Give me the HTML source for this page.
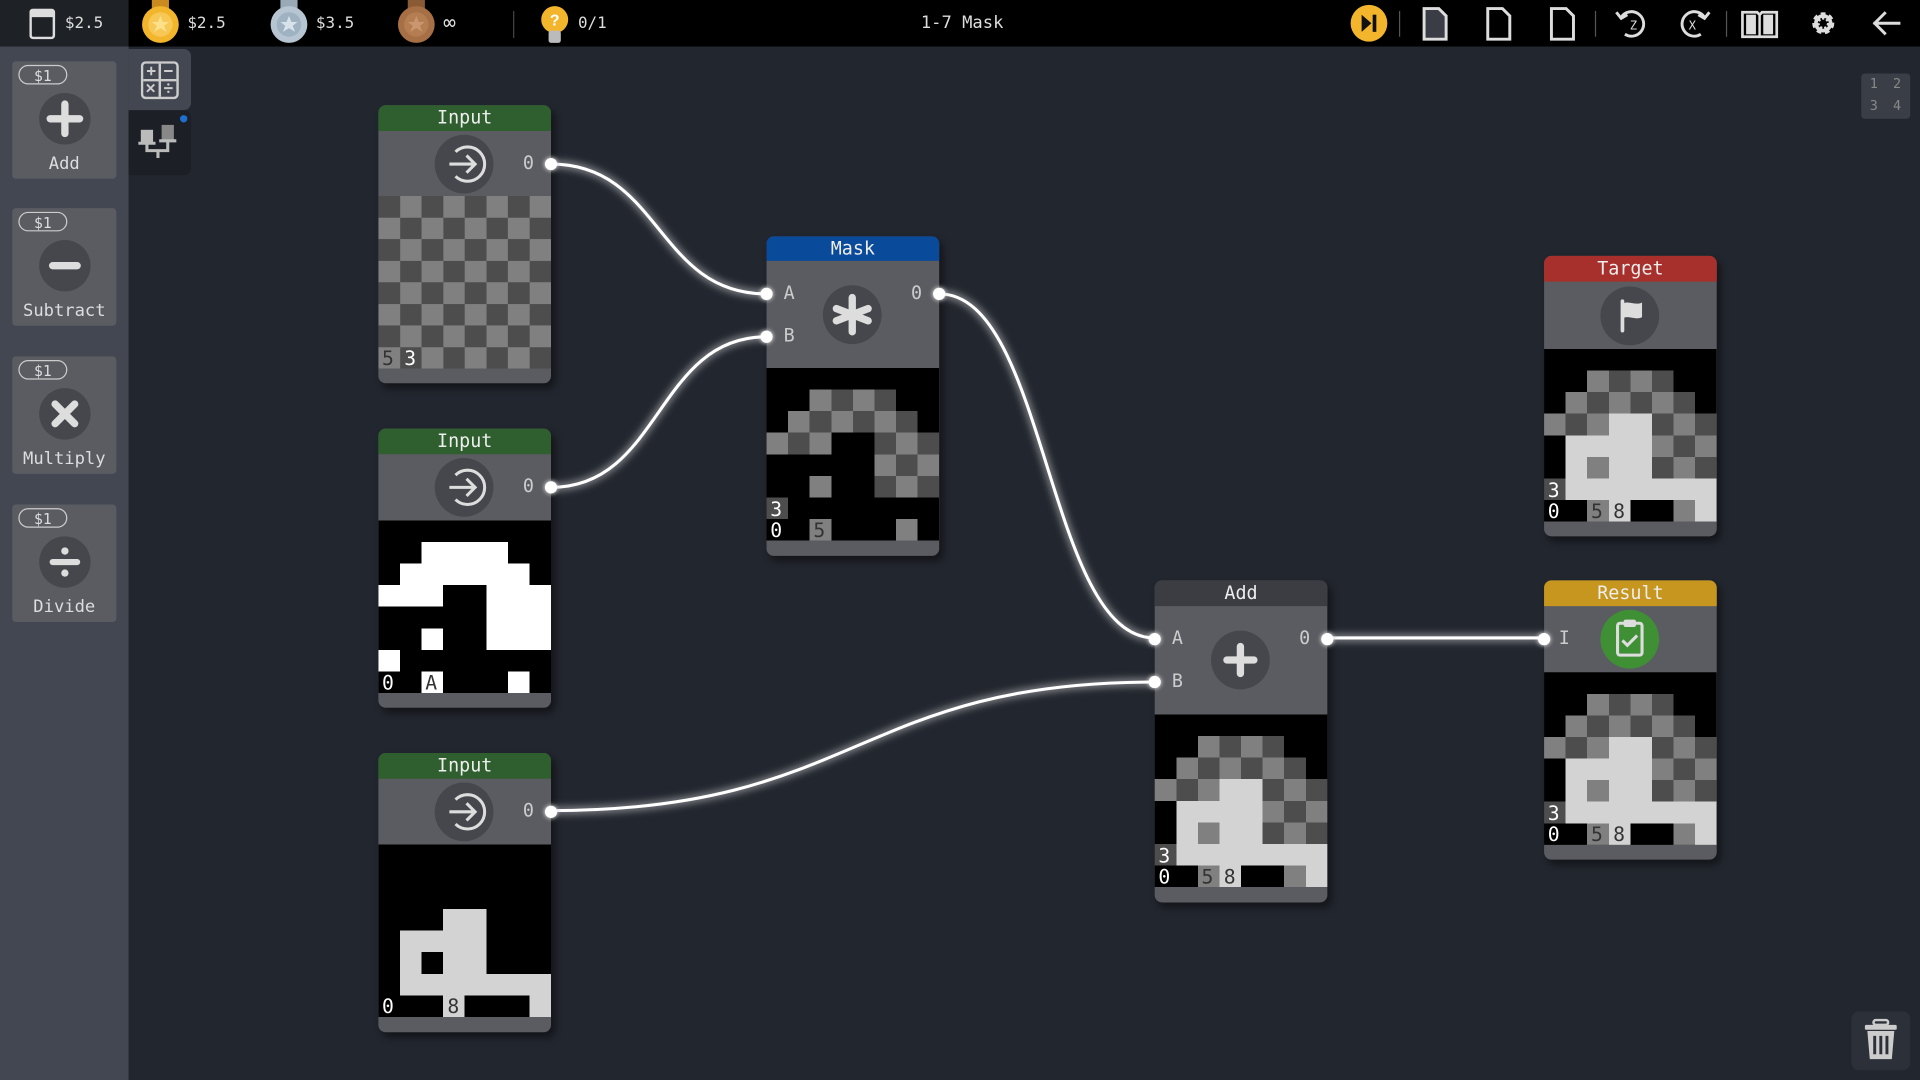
<!DOCTYPE html>
<html><head><meta charset="utf-8"><style>
html,body{margin:0;padding:0;width:1920px;height:1080px;overflow:hidden;background:#22262e}
#s{position:absolute;left:0;top:0;width:1568px;height:882px;transform:scale(1.22449);transform-origin:0 0;font-family:"DejaVu Sans Mono","Liberation Mono",monospace;color:#ddd;background:#22262e}
.top{position:absolute;left:0;top:0;width:1568px;height:38px;background:#000}
.tl{position:absolute;left:0;top:0;width:105px;height:38px;background:#1e2126}
.side{position:absolute;left:0;top:38px;width:105px;height:844px;background:#434751}
.card{position:absolute;left:10px;width:85px;height:96px;background:#5a5c62;border-radius:3px}
.price{position:absolute;left:5px;top:3px;width:40px;height:16px;border:1.5px solid #ccc;border-radius:9px;font-size:12px;text-align:center;line-height:16px;color:#ddd;box-sizing:border-box}
.card .ic{position:absolute;left:22px;top:26px;width:42px;height:42px;border-radius:50%;background:#46474c}
.card .lb{position:absolute;left:0;width:85px;top:76px;text-align:center;font-size:14px;color:#ddd}
.node{position:absolute;width:141px;border-radius:6px;background:#5b5c61;box-shadow:3px 4px 6px rgba(0,0,0,.45);overflow:visible}
.hd{height:21px;border-radius:6px 6px 0 0;text-align:center;font-size:15px;line-height:21px;color:#eee}
.bd{position:relative}
.circ{position:absolute;width:48px;height:48px;border-radius:50%;background:#46474c;left:46px}
.pl{position:absolute;font-size:15px;color:#ccc}
.port{position:absolute;width:10px;height:10px;border-radius:50%;background:#fff;box-shadow:0 0 4px #fff}
svg.g{display:block}
.ft{height:12px;border-radius:0 0 6px 6px}
.tt{position:absolute;top:12px;font-size:13px;color:#ddd}
</style></head><body><div id="s">
<div class="top"></div><div class="tl"></div>
<svg style="position:absolute;left:24px;top:7px" width="22" height="26"><rect x="1" y="1" width="19" height="23" rx="2" fill="none" stroke="#ddd" stroke-width="2"/><rect x="1" y="1" width="19" height="6" fill="#ddd"/></svg>
<div class="tt" style="left:53px">$2.5</div>
<svg style="position:absolute;left:114px;top:-2px" width="34" height="42"><rect x="10" y="0" width="14" height="14" fill="#c98a20"/><circle cx="17" cy="22" r="15" fill="#f2b52c"/><circle cx="17" cy="22" r="10" fill="#f7c855"/><path d="M17 15l2 5h5l-4 3 2 5-5-3-5 3 2-5-4-3h5z" fill="#fde08a"/></svg>
<div class="tt" style="left:153px">$2.5</div>
<svg style="position:absolute;left:219px;top:-2px" width="34" height="42"><rect x="10" y="0" width="14" height="14" fill="#9aa9b6"/><circle cx="17" cy="22" r="15" fill="#b7c5d2"/><circle cx="17" cy="22" r="10" fill="#9fb2c2"/><path d="M17 15l2 5h5l-4 3 2 5-5-3-5 3 2-5-4-3h5z" fill="#d8e2ea"/></svg>
<div class="tt" style="left:258px">$3.5</div>
<svg style="position:absolute;left:323px;top:-2px" width="34" height="42"><rect x="10" y="0" width="14" height="14" fill="#8a5a35"/><circle cx="17" cy="22" r="15" fill="#a66f45"/><circle cx="17" cy="22" r="10" fill="#b47d52"/><path d="M17 15l2 5h5l-4 3 2 5-5-3-5 3 2-5-4-3h5z" fill="#c99670"/></svg>
<div class="tt" style="left:362px;font-size:17px;top:9px">∞</div>
<div style="position:absolute;left:419px;top:9px;width:1px;height:22px;background:#444"></div>
<svg style="position:absolute;left:441px;top:4px" width="24" height="34"><circle cx="12" cy="12" r="11" fill="#f2b52c"/><rect x="7" y="21" width="10" height="10" rx="2" fill="#bbb"/><text x="12" y="17" font-size="13" font-weight="bold" text-anchor="middle" fill="#fff" font-family="Liberation Sans">?</text></svg>
<div class="tt" style="left:472px">0/1</div>
<div class="tt" style="left:752px;font-size:14px;top:11px">1-7 Mask</div>
<svg style="position:absolute;left:1100px;top:2px" width="468" height="36" fill="none" stroke="#ddd" stroke-width="2.4">
<circle cx="18" cy="17" r="15" fill="#f2b52c" stroke="none"/><path d="M12 10l8 7-8 7z" fill="#111" stroke="none"/><rect x="21" y="10" width="3" height="14" fill="#111" stroke="none"/>
<line x1="43" y1="7" x2="43" y2="28" stroke="#555" stroke-width="1"/>
<path d="M63 5h12l6 6v19h-18z" fill="#3a3d45"/>
<path d="M115 5h12l6 6v19h-18z"/>
<path d="M167 5h12l6 6v19h-18z"/>
<line x1="203" y1="7" x2="203" y2="28" stroke="#555" stroke-width="1"/>
<path d="M224 12a10 10 0 1 1 3 14"/><path d="M220 8l4 5 5-3" /><text x="231" y="22" font-size="10" fill="#ddd" stroke="none">Z</text>
<path d="M292 12a10 10 0 1 0 -3 14"/><path d="M296 8l-4 5-5-3"/><text x="279" y="22" font-size="10" fill="#ddd" stroke="none">X</text>
<line x1="310" y1="7" x2="310" y2="28" stroke="#555" stroke-width="1"/>
<path d="M323 8h12l2 2 2-2h12v20h-28z" stroke-width="2.2"/><path d="M337 10v18" stroke-width="2"/><rect x="326" y="10" width="8" height="16" fill="#ddd" stroke="none"/><rect x="340" y="10" width="8" height="16" fill="#ddd" stroke="none"/>
<circle cx="389" cy="17" r="6" stroke-width="6" stroke-dasharray="3 2.3"/><circle cx="389" cy="17" r="6" stroke-width="3"/>
<path d="M430 17h22M440 8l-9 9 9 9"/>
</svg>
<div class="side"></div>
<div style="position:absolute;left:105px;top:40px;width:51px;height:50px;background:#434751;border-radius:0 6px 6px 0"></div>
<div style="position:absolute;left:105px;top:90px;width:51px;height:53px;background:#1c1f25;border-radius:0 6px 6px 0"></div>
<svg style="position:absolute;left:115px;top:50px" width="32" height="32"><rect x="1" y="1" width="29" height="29" rx="3" fill="none" stroke="#ccc" stroke-width="2"/><path d="M15.5 2v27M2 15.5h27" stroke="#ccc" stroke-width="2"/><path d="M5 8h7M8.5 4.5v7M19 8h7M5 19l6 6M11 19l-6 6M19 22h7" stroke="#ccc" stroke-width="1.6"/><circle cx="22.5" cy="19" r="1" fill="#ccc"/><circle cx="22.5" cy="25" r="1" fill="#ccc"/></svg>
<svg style="position:absolute;left:110px;top:92px" width="45" height="40"><circle cx="40" cy="5" r="3" fill="#1e6fd0"/><rect x="5" y="14" width="10" height="10" fill="#bbb"/><rect x="22" y="10" width="10" height="12" fill="#888"/><path d="M3 25h14M20 23h14M10 25v6h17v-8M19 31v6" stroke="#bbb" stroke-width="2.5" fill="none"/></svg>
<div class="card" style="top:50px"><div class="price">$1</div><div class="ic"><svg width="42" height="42"><path d="M21 9v24M9 21h24" stroke="#ddd" stroke-width="6" stroke-linecap="round"/></svg></div><div class="lb">Add</div></div>
<div class="card" style="top:170px"><div class="price">$1</div><div class="ic"><svg width="42" height="42"><path d="M11 21h20" stroke="#ddd" stroke-width="6" stroke-linecap="round"/></svg></div><div class="lb">Subtract</div></div>
<div class="card" style="top:291px"><div class="price">$1</div><div class="ic"><svg width="42" height="42"><path d="M13 13l16 16M29 13l-16 16" stroke="#ddd" stroke-width="6" stroke-linecap="round"/></svg></div><div class="lb">Multiply</div></div>
<div class="card" style="top:412px"><div class="price">$1</div><div class="ic"><svg width="42" height="42"><path d="M11 21h20" stroke="#ddd" stroke-width="5" stroke-linecap="round"/><circle cx="21" cy="12" r="3" fill="#ddd"/><circle cx="21" cy="30" r="3" fill="#ddd"/></svg></div><div class="lb">Divide</div></div>
<svg style="position:absolute;left:0;top:0" width="1568" height="882"><defs><filter id="gl" x="-20%" y="-20%" width="140%" height="140%"><feGaussianBlur stdDeviation="3"/></filter></defs>
<g fill="none" stroke="#fff" stroke-opacity=".45" stroke-width="6" filter="url(#gl)">
<path d="M450 134C540 134 536 240 626 240"/><path d="M450 398C540 398 536 275 626 275"/><path d="M767 240C855 240 855 521 943 521"/><path d="M450 662C700 662 700 557 943 557"/><path d="M1084 521H1261"/></g>
<g fill="none" stroke="#fff" stroke-width="2.5">
<path d="M450 134C540 134 536 240 626 240"/><path d="M450 398C540 398 536 275 626 275"/><path d="M767 240C855 240 855 521 943 521"/><path d="M450 662C700 662 700 557 943 557"/><path d="M1084 521H1261"/></g></svg>

<div class="node" style="left:309px;top:86px"><div class="hd" style="background:#2f5f2e">Input</div>
<div class="bd" style="height:53px"><div class="circ" style="top:3px"><svg width="48" height="48"><path d="M17 14a14 14 0 1 1 0 20" fill="none" stroke="#ddd" stroke-width="2.5"/><path d="M12 24h21M26 17l7 7-7 7" fill="none" stroke="#ddd" stroke-width="2.5"/></svg></div><div class="pl" style="left:118px;top:17px">0</div><div class="port" style="left:136px;top:22px"></div></div>
<svg class="g" width="141" height="141" viewBox="0 0 140 140" shape-rendering="crispEdges"><defs><pattern id="ck" width="35" height="35" patternUnits="userSpaceOnUse"><rect width="35" height="35" fill="#808080"/><rect width="17.5" height="17.5" fill="#4d4d4d"/><rect x="17.5" y="17.5" width="17.5" height="17.5" fill="#4d4d4d"/></pattern></defs><rect width="140" height="140" fill="url(#ck)"/><text x="3" y="137" font-size="16" fill="#333">5</text><text x="21" y="137" font-size="16" fill="#fff">3</text></svg>
<div class="ft"></div></div>

<div class="node" style="left:309px;top:350px"><div class="hd" style="background:#2f5f2e">Input</div>
<div class="bd" style="height:54px"><div class="circ" style="top:3px"><svg width="48" height="48"><path d="M17 14a14 14 0 1 1 0 20" fill="none" stroke="#ddd" stroke-width="2.5"/><path d="M12 24h21M26 17l7 7-7 7" fill="none" stroke="#ddd" stroke-width="2.5"/></svg></div><div class="pl" style="left:118px;top:17px">0</div><div class="port" style="left:136px;top:22px"></div></div>
<svg class="g" width="141" height="141" viewBox="0 0 140 140" shape-rendering="crispEdges"><rect width="140" height="140" fill="#000"/><g fill="#fff">
<rect x="35" y="17.5" width="70" height="17.5"/><rect x="17.5" y="35" width="105" height="17.5"/><rect x="0" y="52.5" width="52.5" height="17.5"/><rect x="87.5" y="52.5" width="52.5" height="52.5"/><rect x="35" y="87.5" width="17.5" height="17.5"/><rect x="0" y="105" width="17.5" height="17.5"/><rect x="35" y="122.5" width="17.5" height="17.5"/><rect x="105" y="122.5" width="17.5" height="17.5"/></g>
<text x="3" y="137" font-size="16" fill="#fff">0</text><text x="38" y="137" font-size="16" fill="#333">A</text></svg>
<div class="ft"></div></div>

<div class="node" style="left:309px;top:615px"><div class="hd" style="background:#2f5f2e">Input</div>
<div class="bd" style="height:53px"><div class="circ" style="top:3px"><svg width="48" height="48"><path d="M17 14a14 14 0 1 1 0 20" fill="none" stroke="#ddd" stroke-width="2.5"/><path d="M12 24h21M26 17l7 7-7 7" fill="none" stroke="#ddd" stroke-width="2.5"/></svg></div><div class="pl" style="left:118px;top:17px">0</div><div class="port" style="left:136px;top:22px"></div></div>
<svg class="g" width="141" height="142" viewBox="0 0 140 140" shape-rendering="crispEdges"><rect width="140" height="140" fill="#000"/><g fill="#d3d3d3">
<rect x="52.5" y="52.5" width="35" height="70"/><rect x="17.5" y="70" width="35" height="17.5"/><rect x="17.5" y="87.5" width="17.5" height="35"/><rect x="35" y="105" width="105" height="17.5"/><rect x="52.5" y="122.5" width="17.5" height="17.5"/><rect x="122.5" y="122.5" width="17.5" height="17.5"/></g>
<text x="3" y="137" font-size="16" fill="#fff">0</text><text x="56" y="137" font-size="16" fill="#333">8</text></svg>
<div class="ft"></div></div>

<div class="node" style="left:626px;top:193px"><div class="hd" style="background:#0a4a9a;height:20px;line-height:20px">Mask</div>
<div class="bd" style="height:87px"><div class="circ" style="top:20px"><svg width="48" height="48"><path d="M24 10v28M11 19l26 10M37 19l-26 10" stroke="#ddd" stroke-width="6" stroke-linecap="round"/></svg></div>
<div class="pl" style="left:14px;top:17px">A</div><div class="pl" style="left:14px;top:52px">B</div><div class="pl" style="left:118px;top:17px">0</div>
<div class="port" style="left:-5px;top:22px"></div><div class="port" style="left:-5px;top:57px"></div><div class="port" style="left:136px;top:22px"></div></div>
<svg class="g" width="141" height="142" viewBox="0 0 140 140" shape-rendering="crispEdges"><rect width="140" height="140" fill="#000"/>
<g fill="#808080"><rect x="35" y="17.5" width="17.5" height="17.5"/><rect x="70" y="17.5" width="17.5" height="17.5"/><rect x="17.5" y="35" width="17.5" height="17.5"/><rect x="52.5" y="35" width="17.5" height="17.5"/><rect x="87.5" y="35" width="17.5" height="17.5"/><rect x="0" y="52.5" width="17.5" height="17.5"/><rect x="35" y="52.5" width="17.5" height="17.5"/><rect x="105" y="52.5" width="17.5" height="17.5"/><rect x="87.5" y="70" width="17.5" height="17.5"/><rect x="35" y="87.5" width="17.5" height="17.5"/><rect x="105" y="87.5" width="17.5" height="17.5"/><rect x="35" y="122.5" width="17.5" height="17.5"/><rect x="105" y="122.5" width="17.5" height="17.5"/></g>
<g fill="#4d4d4d"><rect x="52.5" y="17.5" width="17.5" height="17.5"/><rect x="87.5" y="17.5" width="17.5" height="17.5"/><rect x="35" y="35" width="17.5" height="17.5"/><rect x="70" y="35" width="17.5" height="17.5"/><rect x="105" y="35" width="17.5" height="17.5"/><rect x="17.5" y="52.5" width="17.5" height="17.5"/><rect x="87.5" y="52.5" width="17.5" height="17.5"/><rect x="122.5" y="52.5" width="17.5" height="17.5"/><rect x="105" y="70" width="17.5" height="17.5"/><rect x="122.5" y="70" width="17.5" height="17.5"/><rect x="87.5" y="87.5" width="17.5" height="17.5"/><rect x="122.5" y="87.5" width="17.5" height="17.5"/><rect x="0" y="105" width="17.5" height="17.5"/></g>
<rect x="122.5" y="70" width="17.5" height="17.5" fill="#808080"/><rect x="105" y="70" width="17.5" height="17.5" fill="#4d4d4d"/>
<text x="3" y="120" font-size="16" fill="#fff">3</text><text x="3" y="137" font-size="16" fill="#fff">0</text><text x="38" y="137" font-size="16" fill="#333">5</text></svg>
<div class="ft"></div></div>

<div class="node" style="left:943px;top:474px"><div class="hd" style="background:#3c3d42">Add</div>
<div class="bd" style="height:88px"><div class="circ" style="top:20px"><svg width="48" height="48"><path d="M24 13v22M13 24h22" stroke="#ddd" stroke-width="6" stroke-linecap="round"/></svg></div>
<div class="pl" style="left:14px;top:17px">A</div><div class="pl" style="left:14px;top:52px">B</div><div class="pl" style="left:118px;top:17px">0</div>
<div class="port" style="left:-5px;top:22px"></div><div class="port" style="left:-5px;top:57px"></div><div class="port" style="left:136px;top:22px"></div></div>
<svg class="g" width="141" height="142" viewBox="0 0 140 140" shape-rendering="crispEdges"><use href="#tg"/></svg>
<div class="ft"></div></div>

<div class="node" style="left:1261px;top:209px"><div class="hd" style="background:#a8302c">Target</div>
<div class="bd" style="height:55px"><div class="circ" style="top:4px"><svg width="48" height="48"><path d="M18 12v24" stroke="#ddd" stroke-width="3" stroke-linecap="round"/><path d="M18 14c6-3 10 2 16-1v12c-6 3-10-2-16 1z" fill="#ddd"/></svg></div></div>
<svg class="g" width="141" height="141" viewBox="0 0 140 140" shape-rendering="crispEdges"><g id="tg"><rect width="140" height="140" fill="#000"/>
<g fill="#808080"><rect x="35" y="17.5" width="17.5" height="17.5"/><rect x="70" y="17.5" width="17.5" height="17.5"/><rect x="17.5" y="35" width="17.5" height="17.5"/><rect x="52.5" y="35" width="17.5" height="17.5"/><rect x="87.5" y="35" width="17.5" height="17.5"/><rect x="0" y="52.5" width="17.5" height="17.5"/><rect x="35" y="52.5" width="17.5" height="17.5"/><rect x="105" y="52.5" width="17.5" height="17.5"/><rect x="87.5" y="70" width="17.5" height="17.5"/><rect x="122.5" y="70" width="17.5" height="17.5"/><rect x="35" y="87.5" width="17.5" height="17.5"/><rect x="105" y="87.5" width="17.5" height="17.5"/><rect x="35" y="122.5" width="17.5" height="17.5"/><rect x="105" y="122.5" width="17.5" height="17.5"/></g>
<g fill="#4d4d4d"><rect x="52.5" y="17.5" width="17.5" height="17.5"/><rect x="87.5" y="17.5" width="17.5" height="17.5"/><rect x="35" y="35" width="17.5" height="17.5"/><rect x="70" y="35" width="17.5" height="17.5"/><rect x="105" y="35" width="17.5" height="17.5"/><rect x="17.5" y="52.5" width="17.5" height="17.5"/><rect x="87.5" y="52.5" width="17.5" height="17.5"/><rect x="122.5" y="52.5" width="17.5" height="17.5"/><rect x="105" y="70" width="17.5" height="17.5"/><rect x="87.5" y="87.5" width="17.5" height="17.5"/><rect x="122.5" y="87.5" width="17.5" height="17.5"/><rect x="0" y="105" width="17.5" height="17.5"/></g>
<g fill="#d3d3d3"><rect x="52.5" y="52.5" width="35" height="70"/><rect x="17.5" y="70" width="35" height="17.5"/><rect x="17.5" y="87.5" width="17.5" height="35"/><rect x="35" y="105" width="105" height="17.5"/><rect x="52.5" y="122.5" width="17.5" height="17.5"/><rect x="122.5" y="122.5" width="17.5" height="17.5"/></g>
<text x="3" y="120" font-size="16" fill="#fff">3</text><text x="3" y="137" font-size="16" fill="#fff">0</text><text x="38" y="137" font-size="16" fill="#333">5</text><text x="56" y="137" font-size="16" fill="#333">8</text></g></svg>
<div class="ft"></div></div>

<div class="node" style="left:1261px;top:474px"><div class="hd" style="background:#c6961f">Result</div>
<div class="bd" style="height:54px"><div class="circ" style="top:3px;background:#3f8f35"><svg width="48" height="48"><rect x="14" y="11" width="20" height="26" rx="2" fill="none" stroke="#ddd" stroke-width="2.5"/><rect x="19" y="8" width="10" height="6" rx="1.5" fill="#ddd"/><path d="M18 25l4 4 8-8" fill="none" stroke="#ddd" stroke-width="2.5"/></svg></div>
<div class="pl" style="left:12px;top:17px">I</div><div class="port" style="left:-5px;top:22px"></div></div>
<svg class="g" width="141" height="141" viewBox="0 0 140 140" shape-rendering="crispEdges"><use href="#tg"/></svg>
<div class="ft"></div></div>

<div style="position:absolute;left:1520px;top:60px;width:40px;height:37px;background:#3a3e46;border-radius:3px;font-size:11px;color:#888"><span style="position:absolute;left:7px;top:2px">1</span><span style="position:absolute;left:26px;top:2px">2</span><span style="position:absolute;left:7px;top:20px">3</span><span style="position:absolute;left:26px;top:20px">4</span></div>
<div style="position:absolute;left:1512px;top:826px;width:48px;height:48px;background:#2c3038;border-radius:6px"></div>
<svg style="position:absolute;left:1521px;top:832px" width="30" height="36"><rect x="9" y="1" width="12" height="4" rx="2" fill="none" stroke="#ccc" stroke-width="2"/><rect x="2" y="5" width="26" height="4" rx="1" fill="#ccc"/><path d="M4 10h22l-2 23H6z" fill="#ccc"/><path d="M10 14v15M15 14v15M20 14v15" stroke="#2c3038" stroke-width="2.4"/></svg>
</div></body></html>
